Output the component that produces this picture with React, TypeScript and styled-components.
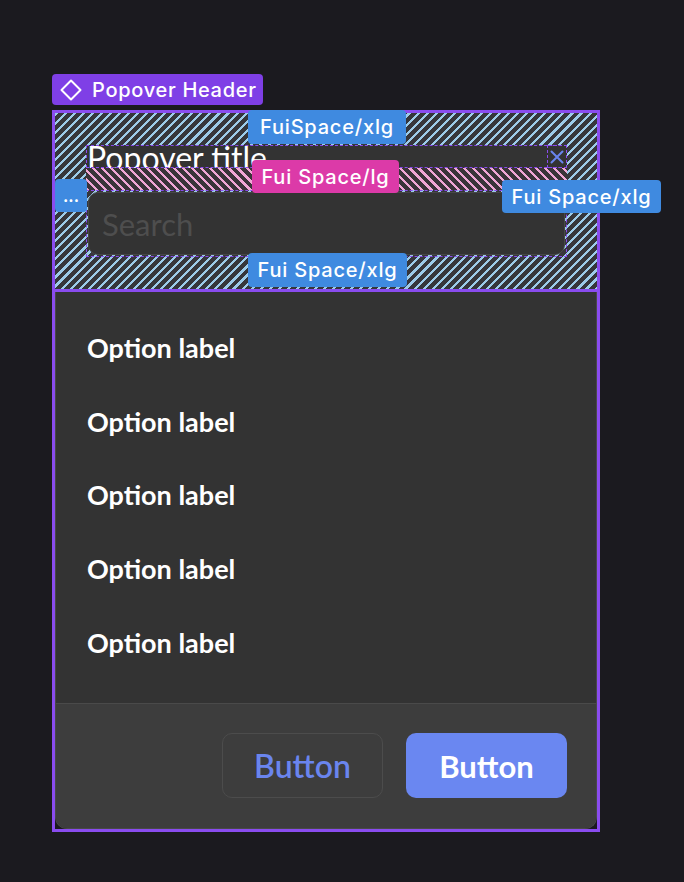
import React from 'react';
import styled, { createGlobalStyle, css } from 'styled-components';

const GlobalStyle = createGlobalStyle`
  html, body {
    margin: 0;
    padding: 0;
    background: #1b1a1f;
  }
  * {
    box-sizing: border-box;
  }
`;

const Page = styled.div`
  width: 684px;
  height: 882px;
  padding: 74px 0 0 52px;
  background: #1b1a1f;
  font-family: 'Lato', 'Noto Sans', sans-serif;
`;

const ComponentTag = styled.div`
  display: inline-flex;
  align-items: center;
  gap: 10px;
  height: 31px;
  padding: 0 6px 0 8px;
  margin-bottom: 5px;
  border-radius: 4px;
  background: #7f3fe6;
  color: #fff;
  font-family: 'Inter', 'Noto Sans', sans-serif;
  font-size: 20px;
  font-weight: 500;
  letter-spacing: 0.7px;
  line-height: 1;
`;

const Frame = styled.div`
  position: relative;
  width: 548px;
  height: 722px;
  border: 3px solid #8a4cef;
  display: flex;
  flex-direction: column;
`;

const Header = styled.div`
  height: 179px;
  padding: 32px 30px 0 31px;
  border-bottom: 3px solid #8a4cef;
  background: repeating-linear-gradient(
    135deg,
    #9ccbe9 0 2.2px,
    #36363b 2.2px 6.4px
  );
  display: flex;
  flex-direction: column;
`;

const dashed = css`
  outline: 1.5px dashed #8a4cef;
  outline-offset: -1px;
`;

const TitleRow = styled.div`
  ${dashed};
  position: relative;
  height: 23px;
  display: flex;
  align-items: flex-start;
  background: #333333;
  overflow: hidden;
`;

const Title = styled.span`
  flex: 1;
  margin-top: -3.5px;
  padding-left: 1px;
  color: #fff;
  font-size: 32px;
  line-height: 32px;
  white-space: nowrap;
`;

const CloseBox = styled.div`
  ${dashed};
  width: 20px;
  height: 23px;
  display: flex;
  align-items: center;
  justify-content: center;
`;

const LgSpace = styled.div`
  height: 22px;
  background: repeating-linear-gradient(
    45deg,
    #f0a6d4 0 2.2px,
    #3a3338 2.2px 6.4px
  );
`;

const SearchWrap = styled.div`
  ${dashed};
  height: 67px;
  padding: 2px;
`;

const SearchInput = styled.input`
  width: 100%;
  height: 100%;
  border: 1px solid #474747;
  border-radius: 10px;
  background: #333333;
  padding: 0 13px;
  font-family: 'Lato', 'Noto Sans', sans-serif;
  font-size: 31px;
  color: #fff;
  outline: none;
  &::placeholder {
    color: #4e4e4e;
  }
`;

const Panel = styled.div`
  flex: 1;
  display: flex;
  flex-direction: column;
  border: 1px solid #494949;
  border-top: none;
  border-radius: 0 0 12px 12px;
  background: #333333;
  overflow: hidden;
`;

const OptionList = styled.div`
  flex: 1;
  padding: 19px 0 23px;
  display: flex;
  flex-direction: column;
`;

const Option = styled.div`
  height: 73.6px;
  display: flex;
  align-items: center;
  padding-left: 31px;
  color: #fff;
  font-size: 27px;
  font-weight: 700;
`;

const Footer = styled.div`
  height: 125px;
  border-top: 1px solid #4a4a4a;
  background: #3d3d3d;
  display: flex;
  justify-content: flex-end;
  align-items: flex-start;
  gap: 23px;
  padding: 29px 29px 0 0;
`;

const Button = styled.button<{ primary?: boolean }>`
  width: 161px;
  height: 65px;
  border-radius: 10px;
  font-family: 'Lato', 'Noto Sans', sans-serif;
  font-size: 31px;
  cursor: pointer;
  ${(p) =>
    p.primary
      ? css`
          background: #6a87f1;
          border: none;
          color: #fff;
          font-weight: 700;
        `
      : css`
          background: transparent;
          border: 1.5px solid #4c4c4c;
          color: #6a85ee;
          font-weight: 600;
          font-size: 32px;
        `}
`;

const SpaceTag = styled.div<{ pink?: boolean }>`
  position: absolute;
  height: 33px;
  display: flex;
  align-items: center;
  justify-content: center;
  border-radius: 4px;
  background: ${(p) => (p.pink ? '#dc3aa8' : '#3f8ae0')};
  color: #fff;
  font-family: 'Inter', 'Noto Sans', sans-serif;
  font-size: 20px;
  font-weight: 500;
  letter-spacing: 0.8px;
  white-space: nowrap;
  z-index: 2;
`;

const options = ['Option label', 'Option label', 'Option label', 'Option label', 'Option label'];

export default function App() {
  return (
    <Page>
      <GlobalStyle />
      <ComponentTag>
        <svg width="22" height="22" viewBox="0 0 22 22" fill="none">
          <path d="M11 1.5L20.5 11L11 20.5L1.5 11Z" stroke="#fff" strokeWidth="2" strokeLinejoin="round" />
        </svg>
        Popover Header
      </ComponentTag>
      <Frame>
        <Header>
          <TitleRow>
            <Title>Popover title</Title>
            <CloseBox>
              <svg width="14" height="14" viewBox="0 0 14 14" fill="none">
                <path d="M1.5 1.5L12.5 12.5M12.5 1.5L1.5 12.5" stroke="#6a85ee" strokeWidth="2" strokeLinecap="round" />
              </svg>
            </CloseBox>
          </TitleRow>
          <LgSpace />
          <SearchWrap>
            <SearchInput placeholder="Search" />
          </SearchWrap>
        </Header>
        <Panel>
          <OptionList>
            {options.map((o, i) => (
              <Option key={i}>{o}</Option>
            ))}
          </OptionList>
          <Footer>
            <Button>Button</Button>
            <Button primary>Button</Button>
          </Footer>
        </Panel>

        <SpaceTag style={{ left: 193, top: -3, width: 158, height: 34 }}>FuiSpace/xlg</SpaceTag>
        <SpaceTag pink style={{ left: 197, top: 47, width: 147 }}>Fui Space/lg</SpaceTag>
        <SpaceTag style={{ left: 447, top: 67, width: 159 }}>Fui Space/xlg</SpaceTag>
        <SpaceTag style={{ left: 193, top: 140, width: 159, height: 34 }}>Fui Space/xlg</SpaceTag>
        <SpaceTag style={{ left: 0, top: 66, width: 32, fontSize: 16, fontWeight: 700, letterSpacing: 0 }}>...</SpaceTag>
      </Frame>
    </Page>
  );
}
